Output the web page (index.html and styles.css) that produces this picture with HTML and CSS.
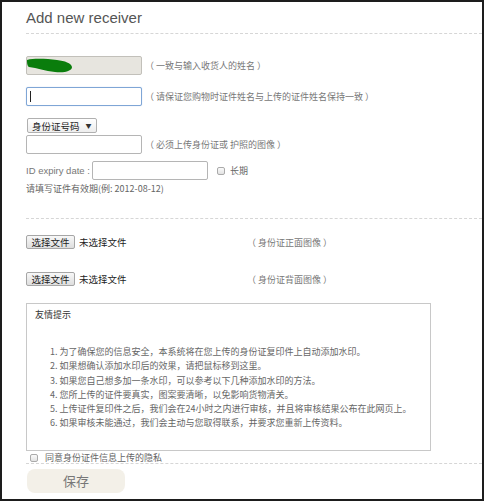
FILE: index.html
```html
<!DOCTYPE html>
<html lang="zh-CN">
<head>
    <meta charset="UTF-8">
    <title>Add new receiver</title>
    <link rel="stylesheet" href="styles.css">
</head>
<body>
    <div class="page">
        <h1 class="title">Add new receiver</h1>

        <div class="row first">
            <span class="field-wrap">
                <input class="field locked" type="text" disabled>
                <svg class="scribble" width="46" height="16" viewBox="0 0 46 16">
                    <path d="M0 2 C8 0 20 1 30 2 C38 3 44 5 45 9 C45 13 38 15 28 14 C18 13 10 10 2 9 C0 8 0 4 0 2 Z" fill="#0a7d0c"/>
                </svg>
            </span>
            <span class="hint">（ 一致与输入收货人的姓名 ）</span>
        </div>

        <div class="row second">
            <span class="field-wrap">
                <input class="field focus" type="text">
                <span class="caret"></span>
            </span>
            <span class="hint">（ 请保证您购物时证件姓名与上传的证件姓名保持一致 ）</span>
        </div>

        <div class="select">身份证号码 <span class="arrow">▼</span></div>

        <div class="row third">
            <input class="field" type="text">
            <span class="hint">（ 必须上传身份证或 护照的图像 ）</span>
        </div>

        <div class="row expiry">
            <span class="label">ID expiry date :</span>
            <input class="field" type="text">
            <span class="box-check"></span>
            <span class="hint dark">长期</span>
        </div>
        <div class="note">请填写证件有效期(例: 2012-08-12)</div>

        <div class="sep"></div>

        <div class="file-row first-file">
            <span class="file-btn">选择文件</span>
            <span class="file-name">未选择文件</span>
            <span class="hint">（ 身份证正面图像 ）</span>
        </div>
        <div class="file-row second-file">
            <span class="file-btn">选择文件</span>
            <span class="file-name">未选择文件</span>
            <span class="hint">（ 身份证背面图像 ）</span>
        </div>

        <div class="tips">
            <div class="tips-title">友情提示</div>
            <ol>
                <li>为了确保您的信息安全，本系统将在您上传的身份证复印件上自动添加水印。</li>
                <li>如果想确认添加水印后的效果，请把鼠标移到这里。</li>
                <li>如果您自己想多加一条水印，可以参考以下几种添加水印的方法。</li>
                <li>您所上传的证件要真实，图案要清晰，以免影响货物清关。</li>
                <li>上传证件复印件之后，我们会在24小时之内进行审核，并且将审核结果公布在此网页上。</li>
                <li>如果审核未能通过，我们会主动与您取得联系，并要求您重新上传资料。</li>
            </ol>
        </div>

        <div class="agree">
            <span class="box-check"></span>
            <span>同意身份证件信息上传的隐私</span>
        </div>

        <div class="save">保存</div>
    </div>
</body>
</html>
```

FILE: styles.css
```css
* {
    box-sizing: border-box;
}

body {
    margin: 0;
    background: #fff;
    font-family: "Noto Sans CJK SC", "DejaVu Sans", sans-serif;
    font-size: 9px;
    color: #777;
}

.page {
    width: 484px;
    height: 501px;
    border: 2px solid #1d1d1d;
    padding-left: 24px;
    overflow: hidden;
}

.title {
    margin: 0;
    padding: 6px 0 5px 0;
    font-family: "Liberation Sans", Arial, sans-serif;
    font-size: 15px;
    line-height: 20px;
    font-weight: normal;
    color: #555;
    border-bottom: 1px dashed #d6d6d6;
}

.row {
    display: flex;
    align-items: center;
    height: 19px;
}

.row.first {
    margin-top: 22px;
}

.row.second {
    margin-top: 12px;
}

.row.third {
    margin-top: 2px;
}

.row.expiry {
    margin-top: 7px;
}

.field-wrap {
    position: relative;
    display: flex;
}

.field {
    width: 116px;
    height: 19px;
    margin: 0;
    padding: 0 3px;
    border: 1px solid #b5b5b5;
    border-radius: 2px;
    background: #fff;
    outline: none;
}

.field.locked {
    background: #e7e5df;
    border-color: #c2c0ba;
}

.field.focus {
    border-color: #7fa6d6;
    box-shadow: 0 0 1px #a9c4e6;
}

.scribble {
    position: absolute;
    left: 1px;
    top: 2px;
}

.caret {
    position: absolute;
    left: 4px;
    top: 4px;
    width: 1px;
    height: 11px;
    background: #222;
}

.hint {
    margin-left: 3px;
    white-space: nowrap;
}

.hint.dark {
    margin-left: 5px;
    color: #666;
}

.select {
    display: inline-flex;
    align-items: center;
    gap: 6px;
    margin-top: 12px;
    margin-left: 1px;
    height: 15px;
    padding: 0 4px 0 4px;
    border: 1px solid #b0b0b0;
    border-radius: 2px;
    background: linear-gradient(#fff, #ededed);
    color: #222;
    font-size: 9.5px;
}

.arrow {
    font-size: 6px;
    color: #333;
}

.label {
    font-family: "Liberation Sans", Arial, sans-serif;
    font-size: 9.5px;
    color: #777;
    margin-right: 2px;
    width: 64px;
}

.box-check {
    display: inline-block;
    width: 8px;
    height: 8px;
    border: 1px solid #aaa;
    border-radius: 2px;
    background: linear-gradient(#fafafa, #e2e2e2);
    margin-left: 9px;
}

.note {
    margin-top: 3px;
    line-height: 12px;
    color: #666;
}

.sep {
    margin-top: 23px;
    border-top: 1px dashed #d6d6d6;
}

.file-row {
    display: flex;
    align-items: center;
    height: 14px;
}

.first-file {
    margin-top: 16px;
}

.second-file {
    margin-top: 23px;
}

.file-btn {
    width: 49px;
    height: 14px;
    line-height: 12px;
    text-align: center;
    border: 1px solid #a6a6a6;
    border-radius: 2px;
    background: linear-gradient(#f8f8f8, #dedede);
    color: #222;
    font-size: 9.5px;
}

.file-name {
    margin-left: 4px;
    width: 165px;
    color: #222;
    font-size: 9.5px;
}

.tips {
    margin-top: 17px;
    width: 405px;
    height: 148px;
    border: 1px solid #c8c8c8;
    padding: 4px 8px 0 8px;
}

.tips-title {
    line-height: 14px;
    color: #333;
}

.tips ol {
    margin: 23px 0 0 0;
    padding-left: 15px;
    list-style-position: inside;
    color: #666;
    line-height: 14.3px;
}

.agree {
    display: flex;
    align-items: center;
    gap: 7px;
    margin-top: 1px;
    height: 12px;
    border-bottom: 1px dashed #d6d6d6;
    color: #666;
}

.agree .box-check {
    margin-left: 4px;
}

.save {
    margin-top: 5px;
    margin-left: 1px;
    width: 98px;
    height: 24px;
    line-height: 24px;
    text-align: center;
    border-radius: 8px;
    background: #f3f0e8;
    color: #777;
    font-size: 13px;
}
```
